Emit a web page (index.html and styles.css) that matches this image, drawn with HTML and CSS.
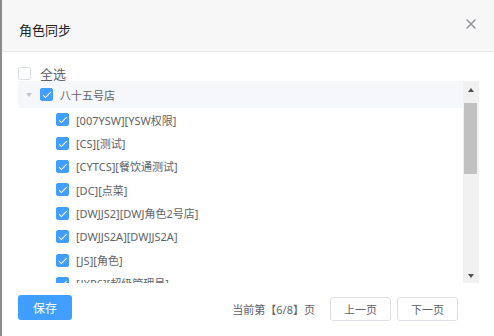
FILE: index.html
```html
<!DOCTYPE html>
<html lang="zh-CN">
<head>
<meta charset="utf-8">
<title>角色同步</title>
<link rel="stylesheet" href="styles.css">
</head>
<body>
<div class="dialog">
  <div class="header">
    <span class="title">角色同步</span>
    <span class="close" aria-label="关闭">
      <svg width="10" height="10" viewBox="0 0 10 10"><path d="M0.6 0.6 L9.4 9.4 M9.4 0.6 L0.6 9.4" stroke="#909399" stroke-width="1.4" fill="none"/></svg>
    </span>
  </div>
  <div class="body">
    <div class="check-all"><span class="cb"></span><span class="all-label">全选</span></div>
    <div class="tree-box">
      <div class="tree">
        <div class="node parent"><span class="caret"></span><span class="cb checked"></span><span class="label">八十五号店</span></div>
        <div class="node child"><span class="cb checked"></span><span class="label">[007YSW][YSW权限]</span></div>
        <div class="node child"><span class="cb checked"></span><span class="label">[CS][测试]</span></div>
        <div class="node child"><span class="cb checked"></span><span class="label">[CYTCS][餐饮通测试]</span></div>
        <div class="node child"><span class="cb checked"></span><span class="label">[DC][点菜]</span></div>
        <div class="node child"><span class="cb checked"></span><span class="label">[DWJJS2][DWJ角色2号店]</span></div>
        <div class="node child"><span class="cb checked"></span><span class="label">[DWJJS2A][DWJJS2A]</span></div>
        <div class="node child"><span class="cb checked"></span><span class="label">[JS][角色]</span></div>
        <div class="node child"><span class="cb checked"></span><span class="label">[JXP6][超级管理员]</span></div>
        <div class="node child"><span class="cb checked"></span><span class="label">[KF][客服]</span></div>
      </div>
      <div class="scrollbar">
        <div class="sb-btn"><span class="arrow-up"></span></div>
        <div class="sb-track"><div class="thumb"></div></div>
        <div class="sb-btn"><span class="arrow-down"></span></div>
      </div>
    </div>
  </div>
  <div class="footer">
    <button class="btn-save">保存</button>
    <div class="pager">
      <span class="page-info">当前第【6/8】页</span>
      <button class="btn">上一页</button>
      <button class="btn btn-next">下一页</button>
    </div>
  </div>
</div>
</body>
</html>
```
FILE: styles.css
```css
html, body {
  margin: 0;
  padding: 0;
  background: #fff;
}
body {
  font-family: "Noto Sans", "Noto Sans CJK SC", sans-serif;
}
.dialog {
  width: 494px;
  height: 336px;
  box-sizing: border-box;
  border-left: 2px solid #8c8c8c;
  background: #fff;
  display: flex;
  flex-direction: column;
  overflow: hidden;
}
.header {
  height: 51px;
  flex: none;
  border-bottom: 1px solid #e8e8e8;
  background: #f7f7f7;
  display: flex;
  align-items: flex-start;
  padding: 0 18px 0 17px;
}
.title {
  margin-top: 21px;
  font-size: 13px;
  line-height: 18px;
  color: #1f2022;
}
.close {
  margin-left: auto;
  margin-top: 19px;
  width: 10px;
  height: 10px;
  display: block;
}
.close svg { display: block; }
.body {
  padding: 13px 0 0 16px;
  flex: none;
}
.check-all {
  display: flex;
  align-items: center;
  height: 16px;
  font-size: 13px;
  color: #606266;
}
.all-label { margin-left: 9px; }
.cb {
  width: 13px;
  height: 13px;
  box-sizing: border-box;
  border: 1px solid #dcdfe6;
  border-radius: 2px;
  background: #fff;
  position: relative;
  flex: none;
}
.cb.checked {
  background: #409eff;
  border-color: #409eff;
}
.cb.checked::after {
  content: "";
  position: absolute;
  left: 3.5px;
  top: 1px;
  width: 3px;
  height: 6.5px;
  border: solid #fff;
  border-width: 0 1px 1px 0;
  transform: rotate(45deg);
}
.tree-box {
  display: flex;
  width: 461px;
  height: 202px;
}
.tree {
  width: 445px;
  overflow: hidden;
}
.node {
  display: flex;
  align-items: center;
  font-size: 11px;
  color: #606266;
  white-space: nowrap;
}
.node .label { margin-left: 7px; }
.node.parent {
  height: 27px;
  background: #f5f7fa;
  padding-left: 8px;
}
.caret {
  width: 0;
  height: 0;
  border-top: 4px solid #c0c4cc;
  border-left: 3px solid transparent;
  border-right: 3px solid transparent;
  margin-right: 8px;
}
.node.child {
  height: 23.4px;
  padding-left: 38px;
}
.scrollbar {
  width: 16px;
  background: #f1f1f1;
  display: flex;
  flex-direction: column;
}
.sb-btn {
  height: 17px;
  flex: none;
  display: flex;
  align-items: center;
  justify-content: center;
}
.arrow-up {
  width: 0;
  height: 0;
  border-bottom: 4px solid #505050;
  border-left: 3.5px solid transparent;
  border-right: 3.5px solid transparent;
}
.arrow-down {
  width: 0;
  height: 0;
  border-top: 4px solid #505050;
  border-left: 3.5px solid transparent;
  border-right: 3.5px solid transparent;
  margin-top: 3px;
}
.sb-track {
  flex: 1;
  padding: 5px 2px 0 1px;
}
.thumb {
  height: 71px;
  background: #c1c1c1;
}
.footer {
  flex: 1;
  display: flex;
  align-items: flex-start;
  padding: 0 36px 0 16px;
}
.btn-save {
  margin-top: 12px;
  width: 54px;
  height: 25px;
  border: none;
  border-radius: 3px;
  background: #409eff;
  color: #fff;
  font-family: inherit;
  font-size: 12px;
  padding: 0;
}
.pager {
  margin-left: auto;
  margin-top: 14px;
  height: 24px;
  display: flex;
  align-items: center;
}
.page-info {
  font-size: 11px;
  color: #606266;
  margin-right: 15px;
}
.btn {
  width: 61px;
  height: 24px;
  box-sizing: border-box;
  border: 1px solid #dcdfe6;
  border-radius: 3px;
  background: #fff;
  color: #606266;
  font-family: inherit;
  font-size: 11px;
  padding: 0;
}
.btn-next { margin-left: 6px; }
```
